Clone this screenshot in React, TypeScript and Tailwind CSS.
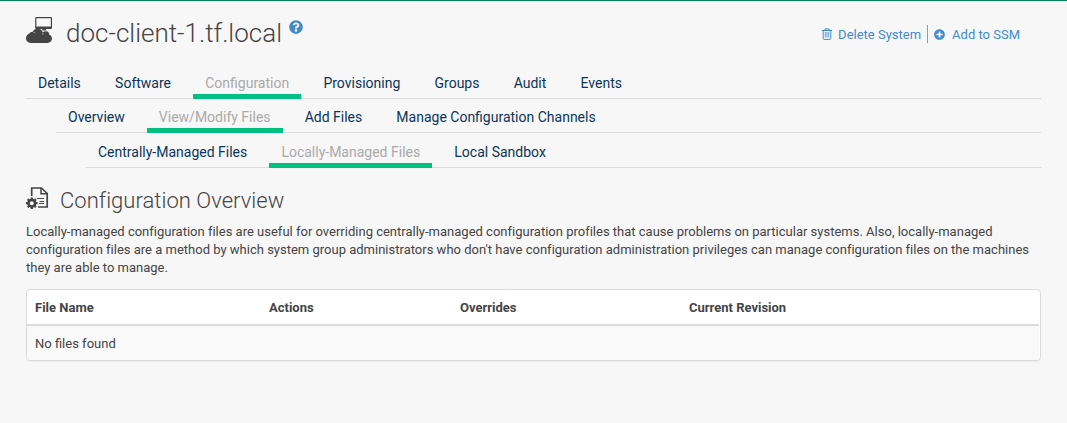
import { FaQuestionCircle, FaPlusCircle } from "react-icons/fa";

type TabsProps = { items: string[]; active: string; className: string };

function Tabs({ items, active, className }: TabsProps) {
  return (
    <ul className={`flex border-b border-[#dbdbdb] text-[14px] leading-5 ${className}`}>
      {items.map((item) => (
        <li
          key={item}
          className={`-mb-px flex items-end border-b-5 px-3 pb-px whitespace-nowrap ${
            item === active ? "border-[#00c081] text-[#aaaaaa]" : "border-transparent text-[#0b3558]"
          }`}
        >
          {item}
        </li>
      ))}
    </ul>
  );
}

function SystemIcon() {
  return (
    <svg className="mt-[17px] h-[26px] w-[27px]" viewBox="0 0 27 26" fill="none">
      <rect x="9.8" y="0.700" width="15.600" height="10.600" rx="0.8" fill="#fafafa" stroke="#444" strokeWidth="1.2" />
      <path d="M9.5 9.600h16.200v1.500q0 .8-.8.8H10.300q-.8 0-.8-.8z" fill="#444" />
      <path d="M16.500 11.500h3.500v1.200l1 .8h-4.800z" fill="#444" />
      <path d="M5 26C2 26 0 24 0 21.300c0-2.300 1.500-4.200 3.500-4.700.4-1.100 1.700-1.900 3.300-1.800C7.400 12.800 9.300 11.700 11.500 11.700c2.700 0 4.600 1.400 5.100 3.600 1.100-.9 2.400-1.300 3.600-1.100 2 .2 3.200 1.600 3.100 3.500 1.700.6 2.700 2.100 2.700 3.900 0 2.600-2 4.400-4.700 4.400z" fill="#444" />
      <path d="M7.500 15.300c.8.1 1.400.4 1.900.8M16.800 15.800c.2.700.2 1.300 0 1.900" stroke="#d0d0d0" strokeWidth="0.700" />
    </svg>
  );
}

function ConfigIcon() {
  return (
    <svg className="h-[24px] w-[23px] shrink-0" viewBox="0 0 23 24" fill="none" stroke="#444">
      <path d="M5.700 10V2H15.500l5.700 5.500v13.500H12" strokeWidth="1.700" />
      <path d="M15 2v5.800h6" strokeWidth="1.500" />
      <path d="M11 12.500h7M13.500 15.500h4.500M13 17.500h5" strokeWidth="1.200" />
      <circle cx="5.800" cy="17.200" r="3.300" strokeWidth="2.500" />
      <path
        d="M5.800 11.400v2M5.800 21v2M0 17.200h2M9.600 17.200h2M1.700 13.100l1.500 1.500M8.400 19.800l1.500 1.500M1.700 21.300l1.500-1.500M8.400 14.600l1.500-1.500"
        strokeWidth="2.200"
      />
    </svg>
  );
}

function TrashIcon() {
  return (
    <svg className="mr-[6px] h-[12px] w-[10px]" viewBox="0 0 10 12" fill="none" stroke="#428bca">
      <path d="M0 2.500h10M3 2.500V.9h4v1.600M1.200 2.500v8q0 .9.900.9h5.800q.9 0 .9-.9v-8" strokeWidth="1" />
      <path d="M3.300 4v5.500M5 4v5.500M6.700 4v5.500" strokeWidth="0.800" />
    </svg>
  );
}

const columns = ["File Name", "Actions", "Overrides", "Current Revision"];

export default function App() {
  return (
    <div className="h-[423px] border-t border-[#008657] bg-[#f7f7f7] pr-[26px] pl-[26px] font-[Roboto,sans-serif] text-[13px] text-[#444]">
      <div className="-mt-px flex h-[69px] items-start">
        <SystemIcon />
        <h1 className="mt-[17px] ml-[13px] text-[26px] leading-8 font-light">doc-client-1.tf.local</h1>
        <FaQuestionCircle className="mt-5 ml-[7px] size-[14px] text-[#428bca]" />
        <div className="mt-[25px] mr-[21px] ml-auto flex h-[18px] items-center text-[#428bca]">
          <TrashIcon />
          <span className="mt-[2px]">Delete System</span>
          <span className="mr-[6px] ml-[6px] h-[18px] w-px bg-[#999]" />
          <FaPlusCircle className="mr-[7px] size-[11px]" />
          <span className="mt-[2px]">Add to SSM</span>
        </div>
      </div>
      <Tabs
        className="h-[30px] gap-[10.24px]"
        active="Configuration"
        items={["Details", "Software", "Configuration", "Provisioning", "Groups", "Audit", "Events"]}
      />
      <Tabs
        className="ml-[30px] h-[34px] gap-[10.1px]"
        active="View/Modify Files"
        items={["Overview", "View/Modify Files", "Add Files", "Manage Configuration Channels"]}
      />
      <Tabs
        className="ml-[60px] h-[35px] gap-[10.1px]"
        active="Locally-Managed Files"
        items={["Centrally-Managed Files", "Locally-Managed Files", "Local Sandbox"]}
      />
      <div className="mt-[18px] flex h-[30px] items-start">
        <ConfigIcon />
        <h2 className="ml-[11px] text-[22px] leading-[30px] font-light tracking-[0.03px]">Configuration Overview</h2>
      </div>
      <p className="mt-[7px] leading-[18px] tracking-[0.003px]">
        Locally-managed configuration files are useful for overriding centrally-managed configuration profiles that
        cause problems on particular systems. Also, locally-managed configuration files are a method by which system
        group administrators who don't have configuration administration privileges can manage configuration files on
        the machines they are able to manage.
      </p>
      <div className="mt-3 h-[72px] rounded-[4px] border border-[#dbdbdb] bg-white pr-px shadow-[0_1px_1px_rgba(0,0,0,0.05)]">
        <div className="grid h-9 grid-cols-[234px_191px_229px_1fr] items-center border-b-2 border-[#dbdbdb] pt-[2px] pl-2 font-bold">
          {columns.map((column) => (
            <span key={column}>{column}</span>
          ))}
        </div>
        <div className="flex h-[34px] items-center rounded-b-[3px] bg-[#f9f9f9] pt-[2px] pl-2">No files found</div>
      </div>
    </div>
  );
}
